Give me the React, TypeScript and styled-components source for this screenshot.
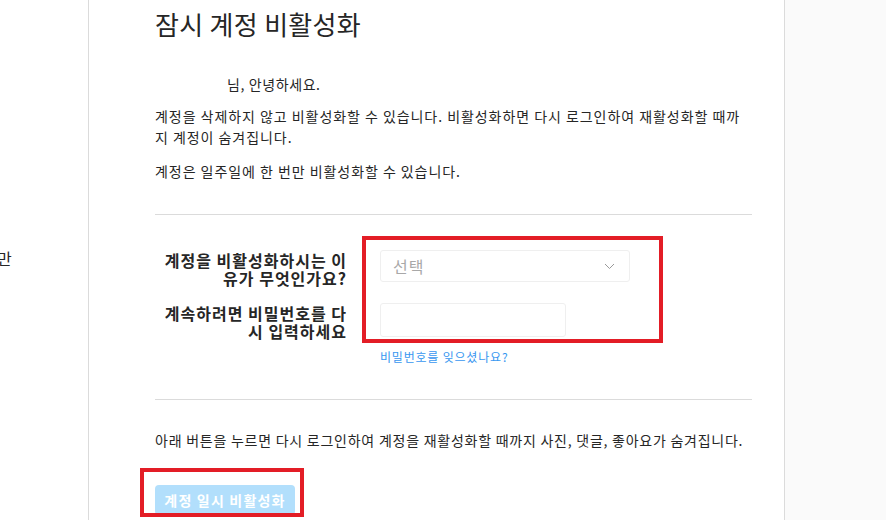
import styled, { createGlobalStyle } from "styled-components";

const FONT = `"Noto Sans CJK KR", "Noto Sans", "Liberation Sans", sans-serif`;

const GlobalStyle = createGlobalStyle`
  html, body {
    margin: 0;
    padding: 0;
    background: #fafafa;
    font-family: ${FONT};
    color: #262626;
  }
`;

const Page = styled.div`
  display: flex;
  height: 520px;
  overflow: hidden;
`;

const Sidebar = styled.nav`
  flex: 0 0 88px;
  background: #fff;
  border-right: 1px solid #dbdbdb;
  padding-top: 248px;
  overflow: hidden;
`;

const NavItem = styled.div`
  margin-left: -3px;
  font-size: 16px;
  line-height: 20px;
  color: #262626;
`;

const Main = styled.main`
  flex: 0 0 696px;
  background: #fff;
  border-right: 1px solid #dbdbdb;
  padding: 8px 32px 0 66px;
  box-sizing: border-box;
  word-break: break-all;
`;

const Title = styled.h1`
  margin: 0;
  font-size: 26px;
  line-height: 32px;
  font-weight: 400;
  letter-spacing: 0.3px;
`;

const Greeting = styled.p`
  margin: 35px 0 0;
  font-size: 14px;
  line-height: 18px;
  letter-spacing: 0.6px;
`;

const Username = styled.span`
  display: inline-block;
  width: 72px;
`;

const Text = styled.p<{ gap?: number; spacing?: number }>`
  margin: ${({ gap }) => gap ?? 13}px 0 0;
  font-size: 14px;
  line-height: 21px;
  letter-spacing: ${({ spacing }) => spacing ?? 0.95}px;
`;

const Divider = styled.hr<{ gap: number }>`
  margin: ${({ gap }) => gap}px 0 0;
  border: 0;
  border-top: 1px solid #dbdbdb;
`;

const Form = styled.section`
  position: relative;
  padding-top: 35px;
  display: flex;
  flex-direction: column;
  gap: 16px;
`;

const Row = styled.div`
  display: flex;
  gap: 33px;
`;

const Label = styled.label`
  flex: 0 0 192px;
  text-align: right;
  font-size: 16px;
  line-height: 18px;
  font-weight: 700;
  letter-spacing: 1px;
  padding-top: 1px;
`;

const Control = styled.div`
  display: flex;
  flex-direction: column;
  align-items: flex-start;
`;

const Select = styled.div`
  width: 250px;
  height: 32px;
  box-sizing: border-box;
  border: 1px solid #efefef;
  border-radius: 3px;
  display: flex;
  align-items: center;
  justify-content: space-between;
  padding: 0 14px 0 12px;
  font-size: 16px;
  letter-spacing: 1px;
  color: #a8a8a8;
`;

const Input = styled.input`
  width: 186px;
  height: 34px;
  box-sizing: border-box;
  border: 1px solid #efefef;
  border-radius: 3px;
  background: #fff;
  outline: none;
`;

const Link = styled.a`
  margin-top: 12px;
  font-size: 12px;
  line-height: 16px;
  color: #3897f0;
  text-decoration: none;
  letter-spacing: 0.8px;
`;

const ButtonWrap = styled.div`
  position: relative;
  margin-top: 34px;
`;

const Button = styled.button`
  width: 140px;
  height: 30px;
  border: 0;
  border-radius: 4px;
  background: #b2dffc;
  color: #fff;
  font-family: ${FONT};
  font-size: 14px;
  font-weight: 700;
  letter-spacing: 1.2px;
`;

const Highlight = styled.div<{ top: number; left: number; w: number; h: number }>`
  position: absolute;
  top: ${({ top }) => top}px;
  left: ${({ left }) => left}px;
  width: ${({ w }) => w}px;
  height: ${({ h }) => h}px;
  box-sizing: border-box;
  border: 4px solid #e31d26;
  pointer-events: none;
`;

const Aside = styled.div`
  flex: 1;
  background: #fafafa;
`;

const Chevron = () => (
  <svg width="11" height="7" viewBox="0 0 11 7">
    <path d="M1 1l4.5 4.5L10 1" fill="none" stroke="#999" strokeWidth="1" />
  </svg>
);

export default function App() {
  return (
    <>
      <GlobalStyle />
      <Page>
        <Sidebar>
          <NavItem>만</NavItem>
        </Sidebar>
        <Main>
          <Title>잠시 계정 비활성화</Title>
          <Greeting>
            <Username />님, 안녕하세요.
          </Greeting>
          <Text>
            계정을 삭제하지 않고 비활성화할 수 있습니다. 비활성화하면 다시
            로그인하여 재활성화할 때까지 계정이 숨겨집니다.
          </Text>
          <Text>계정은 일주일에 한 번만 비활성화할 수 있습니다.</Text>
          <Divider gap={32} />
          <Form>
            <Row>
              <Label>계정을 비활성화하시는 이유가 무엇인가요?</Label>
              <Control>
                <Select>
                  선택
                  <Chevron />
                </Select>
              </Control>
            </Row>
            <Row>
              <Label>계속하려면 비밀번호를 다시 입력하세요</Label>
              <Control>
                <Input type="password" />
                <Link href="#">비밀번호를 잊으셨나요?</Link>
              </Control>
            </Row>
            <Highlight top={21} left={207} w={301} h={107} />
          </Form>
          <Divider gap={34} />
          <Text gap={30} spacing={0.75}>
            아래 버튼을 누르면 다시 로그인하여 계정을 재활성화할 때까지 사진,
            댓글, 좋아요가 숨겨집니다.
          </Text>
          <ButtonWrap>
            <Button disabled>계정 일시 비활성화</Button>
            <Highlight top={-17} left={-15} w={164} h={49} />
          </ButtonWrap>
        </Main>
        <Aside />
      </Page>
    </>
  );
}
